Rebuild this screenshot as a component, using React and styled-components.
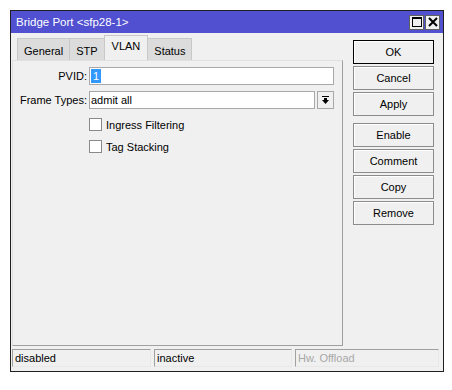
import styled, { createGlobalStyle } from "styled-components";

const GlobalStyle = createGlobalStyle`
  body {
    margin: 0;
    background: #ffffff;
    font-family: "Liberation Sans", Arial, sans-serif;
    font-size: 11px;
    color: #000;
  }
`;

const Window = styled.div`
  box-sizing: border-box;
  margin: 10px 0 0 10px;
  width: 434px;
  height: 362px;
  border: 1px solid #202020;
  background: #f0f0f0;
  display: flex;
  flex-direction: column;
`;

const TitleBar = styled.div`
  height: 22px;
  background: #5050d0;
  color: #fff;
  font-size: 11.5px;
  display: flex;
  align-items: center;
  justify-content: space-between;
  padding: 0 3px 0 5px;
`;

const TitleButtons = styled.div`
  display: flex;
  gap: 1px;
`;

const TitleButton = styled.div`
  box-sizing: border-box;
  width: 15px;
  height: 15px;
  background: #f0f0f0;
  border: 1px solid #606060;
  display: flex;
  align-items: center;
  justify-content: center;
`;

const Main = styled.div`
  flex: 1;
  display: flex;
  padding: 2px 9px 0 1px;
  gap: 10px;
`;

const LeftColumn = styled.div`
  width: 331px;
  display: flex;
  flex-direction: column;
`;

const Tabs = styled.div`
  display: flex;
  align-items: flex-end;
  height: 25px;
  padding-left: 5px;
`;

const Tab = styled.div`
  box-sizing: border-box;
  height: ${(p) => (p.$active ? "25px" : "22px")};
  padding: ${(p) => (p.$active ? "4px 7px 0" : "6px 6px 0")};
  background: ${(p) => (p.$active ? "#f0f0f0" : "#dcdcdc")};
  border: 1px solid #c8c8c8;
  border-bottom: none;
  margin-right: -1px;
`;

const Panel = styled.div`
  box-sizing: border-box;
  flex: 1;
  border: 1px solid #a0a0a0;
  border-left-color: #e0e0e0;
  border-top-color: #e0e0e0;
  padding: 6px 8px 0 0;
  display: flex;
  flex-direction: column;
  gap: 6px;
`;

const Row = styled.div`
  display: flex;
  align-items: center;
  height: 18px;
`;

const Label = styled.div`
  width: 74px;
  text-align: right;
  white-space: nowrap;
`;

const Field = styled.div`
  box-sizing: border-box;
  flex: 1;
  height: 18px;
  margin-left: 2px;
  background: #fff;
  border: 1px solid #a8a8a8;
  display: flex;
  align-items: center;
  padding-left: 1px;
`;

const Selected = styled.span`
  background: #3399ff;
  color: #fff;
  padding: 0 2px;
  line-height: 14px;
`;

const DropButton = styled.div`
  box-sizing: border-box;
  width: 17px;
  height: 18px;
  margin-left: 2px;
  border: 1px solid #a8a8a8;
  background: #f0f0f0;
  display: flex;
  align-items: center;
  justify-content: center;
`;

const CheckRow = styled.label`
  display: flex;
  align-items: center;
  height: 13px;
  margin-left: 76px;
  margin-top: ${(p) => p.$mt || 0}px;
  gap: 4px;
`;

const Box = styled.span`
  box-sizing: border-box;
  width: 13px;
  height: 13px;
  background: #fff;
  border: 1px solid #8a8a8a;
`;

const Buttons = styled.div`
  width: 81px;
  display: flex;
  flex-direction: column;
  gap: 2px;
  padding-top: 5px;
`;

const Button = styled.div`
  box-sizing: border-box;
  height: 24px;
  border: 1px solid ${(p) => (p.$default ? "#000" : "#8c8c8c")};
  box-shadow: inset 1px 1px 0 #fff;
  background: #f0f0f0;
  display: flex;
  align-items: center;
  justify-content: center;
  margin-top: ${(p) => p.$mt || 0}px;
`;

const StatusBar = styled.div`
  display: grid;
  grid-template-columns: 139px 138px 1fr;
  gap: 3px;
  height: 18px;
  margin: 3px 4px 4px 1px;
`;

const StatusCell = styled.div`
  box-sizing: border-box;
  border: 1px solid #e8e8e8;
  border-top-color: #a0a0a0;
  border-left-color: #a0a0a0;
  padding-left: 2px;
  display: flex;
  align-items: center;
  color: ${(p) => (p.$dim ? "#a8a8a8" : "#000")};
`;

const App = () => {
  return (
    <>
      <GlobalStyle />
      <Window>
        <TitleBar>
          <span>Bridge Port &lt;sfp28-1&gt;</span>
          <TitleButtons>
            <TitleButton>
              <svg width="10" height="10" viewBox="0 0 10 10">
                <rect x="0.5" y="0.5" width="9" height="9" fill="none" stroke="#000" />
                <line x1="0" y1="1.5" x2="10" y2="1.5" stroke="#000" />
              </svg>
            </TitleButton>
            <TitleButton>
              <svg width="10" height="10" viewBox="0 0 10 10">
                <path d="M1 1 L9 9 M9 1 L1 9" stroke="#000" strokeWidth="2" />
              </svg>
            </TitleButton>
          </TitleButtons>
        </TitleBar>
        <Main>
          <LeftColumn>
            <Tabs>
              <Tab>General</Tab>
              <Tab>STP</Tab>
              <Tab $active>VLAN</Tab>
              <Tab>Status</Tab>
            </Tabs>
            <Panel>
              <Row>
                <Label>PVID:</Label>
                <Field>
                  <Selected>1</Selected>
                </Field>
              </Row>
              <Row>
                <Label>Frame Types:</Label>
                <Field>admit all</Field>
                <DropButton>
                  <svg width="9" height="9" viewBox="0 0 9 9">
                    <rect x="1" y="0" width="7" height="1" fill="#000" />
                    <path d="M3 2 H6 V4 H8 L4.5 8 L1 4 H3 Z" fill="#000" />
                  </svg>
                </DropButton>
              </Row>
              <CheckRow $mt={3}>
                <Box />
                Ingress Filtering
              </CheckRow>
              <CheckRow $mt={3}>
                <Box />
                Tag Stacking
              </CheckRow>
            </Panel>
          </LeftColumn>
          <Buttons>
            <Button $default>OK</Button>
            <Button>Cancel</Button>
            <Button>Apply</Button>
            <Button $mt={5}>Enable</Button>
            <Button>Comment</Button>
            <Button>Copy</Button>
            <Button>Remove</Button>
          </Buttons>
        </Main>
        <StatusBar>
          <StatusCell>disabled</StatusCell>
          <StatusCell>inactive</StatusCell>
          <StatusCell $dim>Hw. Offload</StatusCell>
        </StatusBar>
      </Window>
    </>
  );
};

export default App;
